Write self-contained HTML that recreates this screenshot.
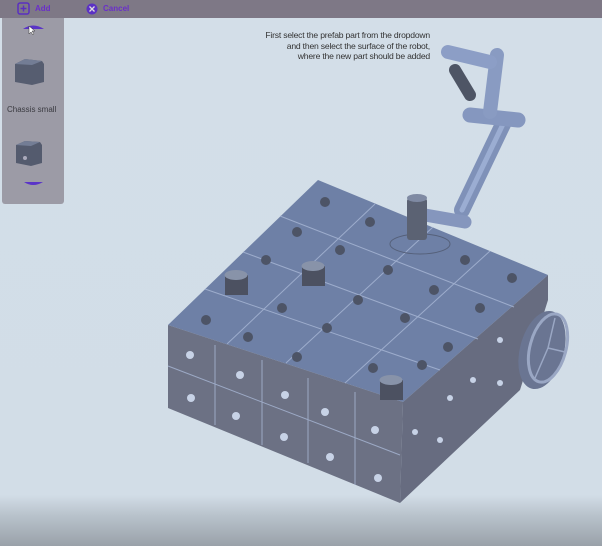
<!DOCTYPE html>
<html><head><style>
html,body{margin:0;padding:0}
body{width:602px;height:546px;position:relative;overflow:hidden;font-family:"Liberation Sans",sans-serif;background:linear-gradient(#d3dee8 0,#d2dde7 495px,#b9c3cc 515px,#9aa1a9 546px)}
.bar{position:absolute;left:0;top:0;width:602px;height:18px;background:#7e7886}
.side{position:absolute;left:2px;top:18px;width:62px;height:186px;background:#9c9ba6;border-radius:0 0 3px 3px}
.t{position:absolute;font-size:8px;font-weight:bold;color:#6a2fc9}
.msg{position:absolute;left:240px;top:30px;width:190px;text-align:right;font-size:8.6px;line-height:10.5px;color:#333;letter-spacing:-.2px}
</style></head><body>
<div class="bar"></div>
<svg style="position:absolute;left:0;top:0" width="140" height="18">
<rect x="18" y="3" width="11" height="11" rx="2" fill="none" stroke="#5a2fc0" stroke-width="1.5"/>
<path d="M23.5 5.5v6M20.5 8.5h6" stroke="#5a2fc0" stroke-width="1.4"/>
<circle cx="92" cy="9" r="5.5" fill="#5b31c4"/>
<path d="M89.5 6.5l5 5M94.5 6.5l-5 5" stroke="#ddd" stroke-width="1.3"/>
</svg>
<div class="t" style="left:35px;top:4px">Add</div>
<div class="t" style="left:103px;top:4px">Cancel</div>
<div class="side"></div>
<svg style="position:absolute;left:0;top:18px" width="66" height="186">
<path d="M23 11 Q33 4 44 11Z" fill="#5a34c8"/>
<path d="M29 8l0 8 2-2 2 3 1-1-2-3 3 0z" fill="#fff" stroke="#333" stroke-width=".5"/>
<path d="M15 46l10-5 17 2 2 3v18l-12 3-17-3z" fill="#565d70"/>
<path d="M15 46l10-5 17 2-10 4z" fill="#737d95"/>
<path d="M16 127l9-4 15 1 2 3v18l-11 3-15-3z" fill="#545b6e"/>
<path d="M16 127l9-4 15 1-9 4z" fill="#737d95"/>
<circle cx="25" cy="140" r="2" fill="#aab"/>
<path d="M24 164 Q33 170 43 164Z" fill="#5a34c8"/>
</svg>
<div style="position:absolute;left:7px;top:105px;font-size:8px;color:#3a3a40">Chassis small</div>
<div class="msg">First select the prefab part from the dropdown<br>and then select the surface of the robot,<br>where the new part should be added</div>
<svg style="position:absolute;left:0;top:0" width="602" height="546">
<g stroke-linecap="round" fill="none">
<path d="M505 120 L462 210" stroke="#7f91b8" stroke-width="16"/>
<path d="M505 120 L462 210" stroke="#9badd2" stroke-width="5"/>
<path d="M470 115 L518 120" stroke="#8597bf" stroke-width="15"/>
<path d="M497 55 L490 112" stroke="#899bc2" stroke-width="14"/>
<path d="M448 52 L490 62" stroke="#8c9ec6" stroke-width="14"/>
<path d="M455 70 L470 95" stroke="#4e5565" stroke-width="12"/>
<path d="M425 215 L465 222" stroke="#8596bd" stroke-width="13"/>
</g>
<polygon points="318,180 548,275 403,402 168,325" fill="#6e80a6"/>
<polygon points="168,325 403,402 400,503 168,408" fill="#6c7184"/>
<polygon points="403,402 548,275 548,300 520,390 400,503" fill="#676c80"/>
<g stroke="#a9b8d6" stroke-width="1" opacity=".8">
<path d="M280 216 L514 307 M243 252 L478 339 M205 289 L440 370"/>
<path d="M375 204 L227 344 M433 227 L286 363 M490 251 L345 383"/>
<path d="M168 366 L400 455 M215 345 L215 425 M262 360 L262 445 M308 378 L308 463 M355 392 L355 485"/>
</g>
<g fill="#4d5466">
<circle cx="325" cy="202" r="5"/><circle cx="370" cy="222" r="5"/><circle cx="297" cy="232" r="5"/><circle cx="340" cy="250" r="5"/><circle cx="266" cy="260" r="5"/><circle cx="388" cy="270" r="5"/><circle cx="465" cy="260" r="5"/><circle cx="512" cy="278" r="5"/><circle cx="282" cy="308" r="5"/><circle cx="358" cy="300" r="5"/><circle cx="434" cy="290" r="5"/><circle cx="480" cy="308" r="5"/><circle cx="206" cy="320" r="5"/><circle cx="248" cy="337" r="5"/><circle cx="327" cy="328" r="5"/><circle cx="405" cy="318" r="5"/><circle cx="448" cy="347" r="5"/><circle cx="297" cy="357" r="5"/><circle cx="373" cy="368" r="5"/><circle cx="422" cy="365" r="5"/>
</g>
<g fill="#c7d2e6">
<circle cx="190" cy="355" r="4"/><circle cx="240" cy="375" r="4"/><circle cx="285" cy="395" r="4"/><circle cx="325" cy="412" r="4"/><circle cx="375" cy="430" r="4"/>
<circle cx="191" cy="398" r="4"/><circle cx="236" cy="416" r="4"/><circle cx="284" cy="437" r="4"/><circle cx="330" cy="457" r="4"/><circle cx="378" cy="478" r="4"/>
<circle cx="415" cy="432" r="3"/><circle cx="450" cy="398" r="3"/><circle cx="500" cy="340" r="3"/><circle cx="473" cy="380" r="3"/><circle cx="440" cy="440" r="3"/><circle cx="500" cy="383" r="3"/>
</g>
<ellipse cx="420" cy="244" rx="30" ry="10" fill="none" stroke="#55607a"/>
<rect x="407" y="198" width="20" height="42" rx="3" fill="#5b6273"/>
<ellipse cx="417" cy="198" rx="10" ry="4" fill="#7f8aa3"/>
<rect x="225" y="275" width="23" height="20" fill="#4c5161"/><ellipse cx="236" cy="275" rx="11.5" ry="5" fill="#8893a9"/>
<rect x="302" y="266" width="23" height="20" fill="#4c5161"/><ellipse cx="313" cy="266" rx="11.5" ry="5" fill="#8893a9"/>
<rect x="380" y="380" width="23" height="20" fill="#4c5161"/><ellipse cx="391" cy="380" rx="11.5" ry="5" fill="#8893a9"/>
<ellipse cx="542" cy="350" rx="22" ry="40" fill="#6a7592" transform="rotate(15 542 350)"/>
<ellipse cx="548" cy="348" rx="18" ry="35" fill="none" stroke="#9aa7c4" stroke-width="3" transform="rotate(15 548 348)"/>
<path d="M548 348 L555 318 M548 348 L535 378 M548 348 L565 352" stroke="#9aa7c4" stroke-width="1.5"/>
</svg>
</body></html>
